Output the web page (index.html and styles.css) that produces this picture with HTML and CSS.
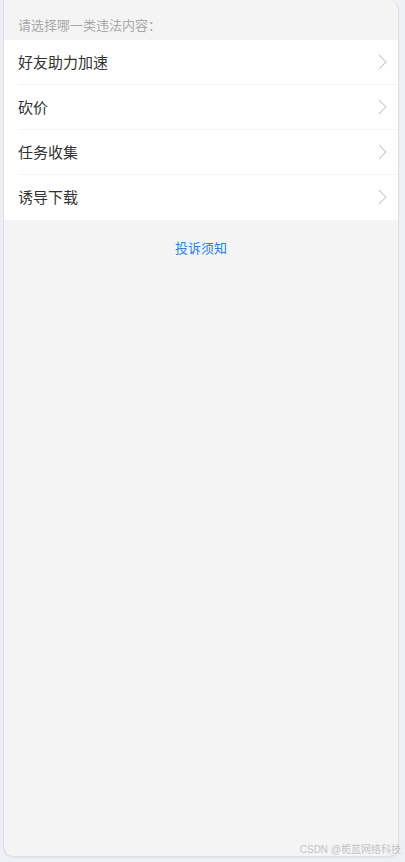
FILE: index.html
```html
<!DOCTYPE html>
<html lang="zh-CN">
    <head>
        <meta charset="UTF-8" />
        <meta content="width=device-width, initial-scale=1.0" name="viewport" />
        <title>投诉</title>
        <link rel="stylesheet" href="styles.css">
    </head>

    <body>
        <div id="app">
            <div class="phone">
                <div class="hint">请选择哪一类违法内容：</div>
                <div class="list">
                    <div class="row">
                        <span>好友助力加速</span>
                        <svg class="arrow" width="9" height="16" viewBox="0 0 9 16"><path d="M1 1l7 7-7 7" /></svg>
                    </div>
                    <div class="row">
                        <span>砍价</span>
                        <svg class="arrow" width="9" height="16" viewBox="0 0 9 16"><path d="M1 1l7 7-7 7" /></svg>
                    </div>
                    <div class="row">
                        <span>任务收集</span>
                        <svg class="arrow" width="9" height="16" viewBox="0 0 9 16"><path d="M1 1l7 7-7 7" /></svg>
                    </div>
                    <div class="row">
                        <span>诱导下载</span>
                        <svg class="arrow" width="9" height="16" viewBox="0 0 9 16"><path d="M1 1l7 7-7 7" /></svg>
                    </div>
                </div>
                <a class="notice">投诉须知</a>
            </div>
            <div class="watermark">CSDN @栀蓝网络科技</div>
        </div>
    </body>
</html>
```

FILE: styles.css
```css
html {
    background-color: #edf0f5;
}

body {
    margin: 0;
    font-family: "Noto Sans CJK SC", "Noto Sans", sans-serif;
}
#app {
    position: relative;
    height: 862px;
    padding: 0 6px 0 3px;
}
.phone {
    display: flex;
    flex-direction: column;
    height: 857px;
    box-sizing: border-box;
    background-color: #f4f4f4;
    border: 1px solid #dedfe1;
    border-top: none;
    border-radius: 0 10px 10px 10px;
    box-shadow: 0 1px 2px rgba(0, 0, 0, 0.06);
    overflow: hidden;
}
.hint {
    height: 40px;
    box-sizing: border-box;
    padding: 16px 14px 0;
    font-size: 13px;
    line-height: 18px;
    color: #a8a8a8;
}
.list {
    background-color: #fff;
}
.row {
    display: flex;
    align-items: center;
    justify-content: space-between;
    height: 45px;
    margin-left: 14px;
    padding-right: 11px;
    border-bottom: 1px solid #f3f3f3;
    box-sizing: border-box;
    font-size: 15px;
    line-height: 20px;
    padding-bottom: 1px;
    color: #333;
}
.row:last-child {
    border-bottom: none;
}
.arrow path {
    fill: none;
    stroke: #cfcfcf;
    stroke-width: 1.2;
}
.notice {
    margin-top: 19px;
    text-align: center;
    font-size: 13px;
    line-height: 18px;
    color: #2a7ff0;
}
.watermark {
    position: absolute;
    right: 4px;
    bottom: 5px;
    font-size: 10px;
    line-height: 14px;
    color: #c4c4c4;
    font-family: "Liberation Sans", "Noto Sans CJK SC", sans-serif;
}
```
